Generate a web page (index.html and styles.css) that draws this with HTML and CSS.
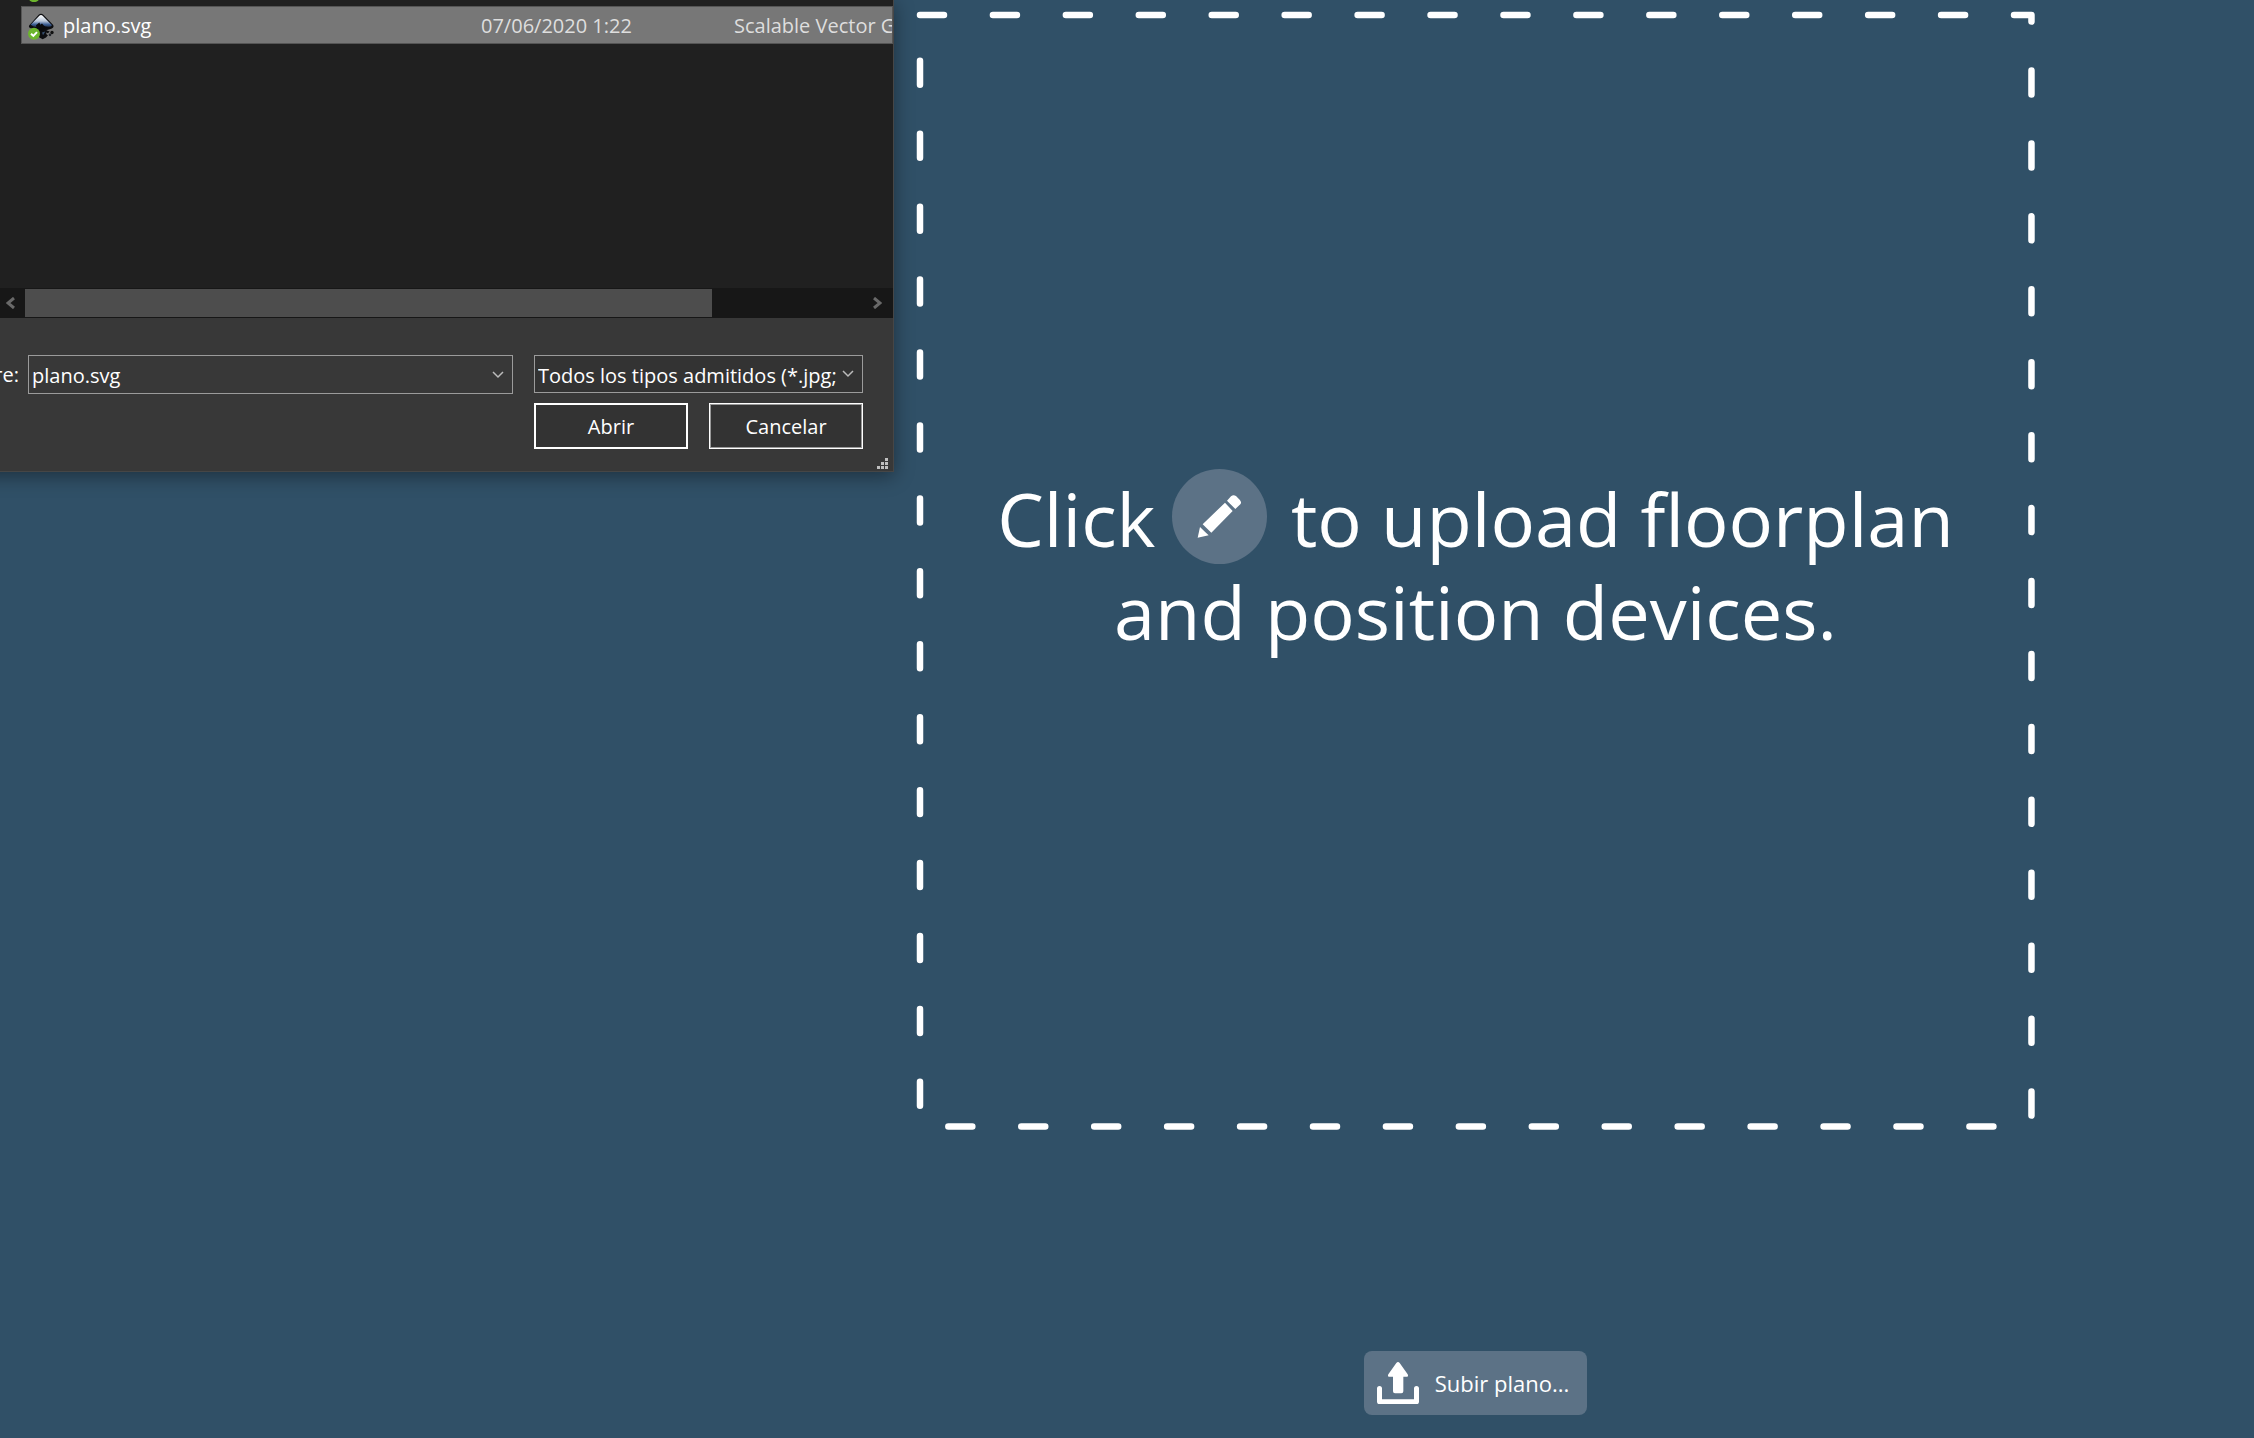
FILE: index.html
```html
<!DOCTYPE html>
<html lang="es">
<head>
<meta charset="utf-8">
<title>Plano</title>
<link rel="stylesheet" href="styles.css">
</head>
<body>
<main class="stage">
  <section class="floorplan">
    <svg class="floorplan-frame" viewBox="0 0 1120 1120" aria-hidden="true">
      <path d="M4 4H1116V1116H4Z" fill="none" stroke="#fff" stroke-width="6.5" stroke-linecap="round" stroke-linejoin="round" stroke-dasharray="24 48.97"/>
    </svg>
    <p class="floorplan-text">Click
      <span class="pencil"><svg viewBox="0 0 285 285" fill="#fff" aria-hidden="true"><path d="M77 206L84 174Q97 187 110 199ZM159 101L182 126L118 191L92 166ZM165 95L177 82Q184 76 192 81L203 92Q210 100 205 106L190 120Z"/></svg></span>
      to upload floorplan<br>and position devices.</p>
  </section>
  <button class="upload" type="button">
    <svg viewBox="0 0 126 126" aria-hidden="true"><path fill="#fff" d="M58 3Q63-3 68 3L92 37Q95 44 90 44H79V88Q79 94 73 94H54Q48 94 48 88V44H36Q31 44 34 37Z"/><path d="M7.500 79.500V119H118.500V79.500" fill="none" stroke="#fff" stroke-width="15" stroke-linecap="round" stroke-linejoin="round"/></svg>
    <span>Subir plano...</span>
  </button>
</main>

<section class="dialog" role="dialog" aria-label="Abrir">
  <div class="file-list">
    <table class="files">
      <tbody>
        <tr>
          <td class="col-name"><span class="file"><svg class="file-icon" viewBox="0 0 78 80" aria-hidden="true"><circle cx="18" cy="63" r="18" fill="#6cb52d"/></svg>datos.svg</span></td>
          <td class="col-date">07/06/2020 1:20</td>
          <td class="col-type">Carpeta</td>
        </tr>
        <tr class="selected">
          <td class="col-name"><span class="file"><svg class="file-icon" viewBox="0 0 78 80" aria-hidden="true">
            <defs><linearGradient id="peak" x1="0" y1="0" x2="0" y2="1"><stop offset="0" stop-color="#fff"/><stop offset=".45" stop-color="#b9c6d8"/><stop offset=".7" stop-color="#3d5f94"/><stop offset="1" stop-color="#10151f"/></linearGradient></defs>
            <path d="M4 36L32 5Q39-2 46 5L75 35Q80 43 70 47L55 51L65 55L60 60L54 58L56 64L60 66L54 73L44 78L34 73L28 60L22 50L8 45Q0 42 4 36Z" fill="#0c0d10"/>
            <path d="M8 35L34 8Q39 3 44 8L72 36Q68 43 56 40L44 46L36 36L28 42Q16 42 8 35Z" fill="url(#peak)"/>
            <path d="M24 36L34 28L37 35L42 31L48 38L58 42L40 54L26 46Z" fill="#090a0c"/>
            <path d="M42 58L52 55L45 66Z" fill="#38506f"/><circle cx="72" cy="58" r="5" fill="#111"/><circle cx="66" cy="65" r="4" fill="#20242b"/>
            <circle cx="18" cy="62" r="18" fill="#6cb52d"/><path d="M9 62L16 68L27 57" fill="none" stroke="#fff" stroke-width="6"/>
          </svg>plano.svg</span></td>
          <td class="col-date">07/06/2020 1:22</td>
          <td class="col-type">Scalable Vector Graphics</td>
        </tr>
      </tbody>
    </table>
  </div>
  <div class="scrollbar">
    <button type="button" class="scroll-arrow" aria-label="Desplazar a la izquierda"><svg width="9" height="12" viewBox="0 0 9 12"><path d="M8 1L2 6L8 11" fill="none" stroke="#696969" stroke-width="3"/></svg></button>
    <div class="scroll-track"><div class="scroll-thumb"></div></div>
    <button type="button" class="scroll-arrow scroll-right" aria-label="Desplazar a la derecha"><svg width="9" height="12" viewBox="0 0 9 12"><path d="M1 1L7 6L1 11" fill="none" stroke="#696969" stroke-width="3"/></svg></button>
  </div>
  <form class="controls">
    <label class="name-label" for="filename">Nombre:</label>
    <div class="combo">
      <input id="filename" type="text" value="plano.svg">
      <svg class="chevron" viewBox="0 0 12 8" aria-hidden="true"><path d="M1 1L6 6L11 1" fill="none" stroke="#bbb" stroke-width="1.500"/></svg>
    </div>
    <div class="choices">
      <div class="combo type-combo">
        <select aria-label="Tipo de archivo"><option>Todos los tipos admitidos (*.jpg;</option></select>
        <svg class="chevron" viewBox="0 0 12 8" aria-hidden="true"><path d="M1 1L6 6L11 1" fill="none" stroke="#bbb" stroke-width="1.500"/></svg>
      </div>
      <button type="button" class="action primary">Abrir</button>
      <button type="button" class="action">Cancelar</button>
    </div>
  </form>
  <svg class="grip" viewBox="0 0 11 11" fill="#bfbfbf" aria-hidden="true"><path d="M8 0h3v3H8zM4 4h3v3H4zM8 4h3v3H8zM0 8h3v3H0zM4 8h3v3H4zM8 8h3v3H8z"/></svg>
</section>
</body>
</html>
```
FILE: styles.css
```css
* {
  box-sizing: border-box;
}

body {
  margin: 0;
  overflow: hidden;
  background: #305067;
  color: #fff;
  font-family: "Open Sans", "Noto Sans", sans-serif;
  font-size: 20px;
}

button,
input,
select {
  margin: 0;
  color: inherit;
  font: inherit;
}

svg {
  display: block;
}

/* Floorplan area */
.stage {
  display: flex;
  flex-direction: column;
  align-items: center;
  justify-content: space-between;
  min-height: 100vh;
  padding: 11px 0 23px 697px;
}

.floorplan {
  display: grid;
  width: 71.9%;
}

.floorplan-frame,
.floorplan-text {
  grid-area: 1 / 1;
}

.floorplan-frame {
  width: 100%;
}

.floorplan-text {
  align-self: start;
  margin: 0;
  padding-top: 461px;
  font-size: 74px;
  line-height: 93px;
  text-align: center;
  white-space: nowrap;
}

.pencil {
  display: inline-block;
  width: 95px;
  height: 95px;
  margin: -20px 5px -20px -3px;
  border-radius: 50%;
  background: #5c7286;
  vertical-align: 3px;
}

.upload {
  display: flex;
  align-items: center;
  gap: 16px;
  height: 64px;
  padding: 0 18px 0 13px;
  border: 0;
  border-radius: 8px;
  background: #5c7286;
  font-size: 22px;
}

.upload svg {
  width: 42px;
  height: 42px;
}

/* File dialog */
.dialog {
  position: absolute;
  top: 0;
  left: -80px;
  width: 974px;
  border: solid #464646;
  border-width: 0 1px 1px 0;
  background: #383838;
  box-shadow: 0 4px 18px rgba(0, 0, 0, 0.4);
}

.file-list {
  height: 288px;
  padding-left: 101px;
  overflow: hidden;
  background: #202020;
}

.files {
  width: 100%;
  margin-top: -32px;
  border-collapse: collapse;
  table-layout: fixed;
}

.files td {
  height: 38px;
  padding: 2px 0 0;
  line-height: 36px;
  overflow: hidden;
  white-space: nowrap;
}

.selected {
  background: #777;
  outline: 1px solid #555;
  outline-offset: -1px;
}

.col-name {
  width: 460px;
}

.col-date {
  width: 253px;
}

.col-date,
.col-type {
  color: #dedede;
}

.file {
  display: flex;
  align-items: center;
  gap: 9px;
  padding-left: 7px;
}

.file-icon {
  width: 26px;
  height: 27px;
}

.scrollbar {
  display: flex;
  height: 30px;
  padding: 1px 0 1px 80px;
  background: #171717;
}

.scroll-arrow {
  display: flex;
  align-items: center;
  width: 25px;
  padding: 0 0 0 6px;
  border: 0;
  background: none;
}

.scroll-right {
  width: 30px;
  padding-left: 10px;
}

.scroll-track {
  flex: 1;
}

.scroll-thumb {
  width: 82%;
  height: 100%;
  background: #4d4d4d;
}

.controls {
  display: flex;
  align-items: flex-start;
  padding: 37px 30px 22px 0;
}

.name-label {
  width: 108px;
  padding-right: 9px;
  line-height: 40px;
  text-align: right;
}

.combo {
  display: grid;
  flex: 1;
  align-items: center;
}

.combo > * {
  grid-area: 1 / 1;
}

.combo input,
.combo select {
  appearance: none;
  width: 100%;
  height: 39px;
  padding: 2px 24px 0 3px;
  border: 1px solid #9b9b9b;
  border-radius: 0;
  outline: 0;
  background: #383838;
}

.combo select {
  height: 38px;
  background: #333;
}

.chevron {
  justify-self: end;
  width: 12px;
  height: 8px;
  margin-right: 9px;
  pointer-events: none;
}

.choices {
  display: grid;
  grid-template-columns: 1fr 1fr;
  gap: 10px 21px;
  width: 329px;
  margin-left: 21px;
}

.type-combo {
  grid-column: 1 / 3;
}

.action {
  height: 46px;
  padding: 1px 0 0;
  border: 1px solid #fff;
  background: #333;
  box-shadow: inset 0 0 0 1px #999;
}

.primary {
  border-width: 2px;
  box-shadow: none;
}

.grip {
  position: absolute;
  right: 5px;
  bottom: 2px;
  width: 11px;
  height: 11px;
}
```
